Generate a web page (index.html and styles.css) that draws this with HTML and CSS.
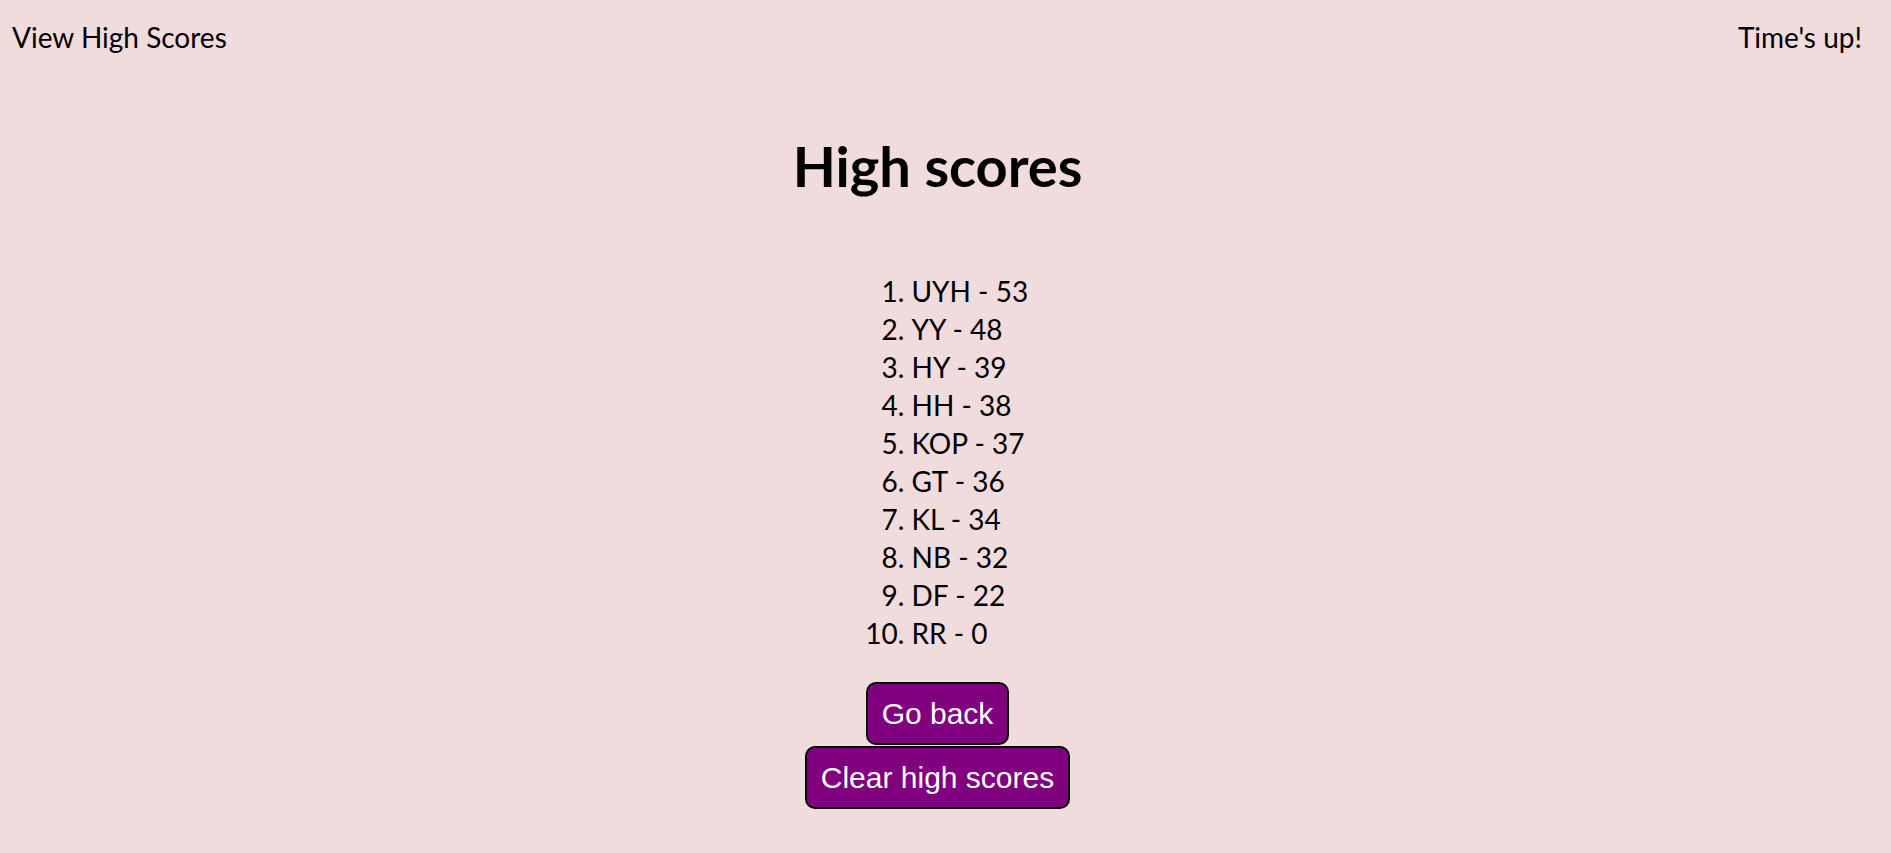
FILE: index.html
```html
<!DOCTYPE html>
<html lang="en">
<head>
<meta charset="utf-8">
<title>High scores</title>
<link rel="stylesheet" href="styles.css">
</head>
<body>
<header class="topbar">
  <a class="view-link">View High Scores</a>
  <span class="timer">Time's up!</span>
</header>
<main class="scores">
  <h1 class="title">High scores</h1>
  <ol class="score-list">
    <li>UYH - 53</li>
    <li>YY - 48</li>
    <li>HY - 39</li>
    <li>HH - 38</li>
    <li>KOP - 37</li>
    <li>GT - 36</li>
    <li>KL - 34</li>
    <li>NB - 32</li>
    <li>DF - 22</li>
    <li>RR - 0</li>
  </ol>
  <div class="actions">
    <button class="btn">Go back</button>
    <button class="btn">Clear high scores</button>
  </div>
</main>
</body>
</html>
```

FILE: styles.css
```css
html, body {
  margin: 0;
  padding: 0;
}
body {
  background: #f0dbdd;
  color: #000;
  font-family: Lato, "Noto Sans", sans-serif;
  font-size: 28px;
  line-height: 38px;
}
.topbar {
  display: flex;
  justify-content: space-between;
  padding: 18px 29px 0 12px;
}
.view-link {
  color: #000;
  cursor: pointer;
}
.scores {
  display: flex;
  flex-direction: column;
  align-items: center;
  padding-right: 16px;
}
.title {
  margin: 76px 0 0 0;
  font-size: 56px;
  line-height: 67px;
  font-weight: 700;
}
.score-list {
  box-sizing: border-box;
  width: 132px;
  margin: 73px 0 0 0;
  padding-left: 40px;
  white-space: nowrap;
}
.actions {
  margin-top: 30px;
  display: flex;
  flex-direction: column;
  align-items: center;
  gap: 1px;
}
.btn {
  font-family: "Liberation Sans", Arial, sans-serif;
  font-size: 30px;
  line-height: 35px;
  color: #fff;
  background: #800080;
  border: 2px solid #000;
  border-radius: 10px;
  padding: 12px 14px;
  cursor: pointer;
}
```
